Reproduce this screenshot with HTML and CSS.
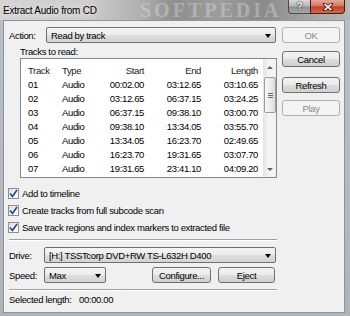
FILE: index.html
```html
<!DOCTYPE html>
<html>
<head>
<meta charset="utf-8">
<link rel="stylesheet" href="styles.css">
</head>
<body>
<div class="window">
  <div class="titlebar">
    <span class="title">Extract Audio from CD</span>
    <span class="watermark">SOFTPEDIA</span>
    <div class="caption-btns">
      <div class="cap help">?</div>
      <div class="cap close">
        <svg width="10" height="8" viewBox="0 0 10 8"><path d="M1.5 0.8 L8.5 7.2 M8.5 0.8 L1.5 7.2" stroke="#3a0a05" stroke-width="3" stroke-linecap="square"/><path d="M1.5 0.8 L8.5 7.2 M8.5 0.8 L1.5 7.2" stroke="#fff" stroke-width="1.6"/></svg>
      </div>
    </div>
  </div>
  <div class="client">
    <div class="main">
      <div class="row action-row">
        <span class="lbl lbl-action">Action:</span>
        <div class="combo combo-action">Read by track<span class="arrow"></span></div>
      </div>
      <div class="tracks-label">Tracks to read:</div>
      <div class="list">
        <div class="list-body">
          <div class="lv-row header"><span>Track</span><span>Type</span><span class="r">Start</span><span class="r">End</span><span class="r">Length</span></div>
          <div class="lv-row"><span>01</span><span>Audio</span><span class="r">00:02.00</span><span class="r">03:12.65</span><span class="r">03:10.65</span></div>
          <div class="lv-row"><span>02</span><span>Audio</span><span class="r">03:12.65</span><span class="r">06:37.15</span><span class="r">03:24.25</span></div>
          <div class="lv-row"><span>03</span><span>Audio</span><span class="r">06:37.15</span><span class="r">09:38.10</span><span class="r">03:00.70</span></div>
          <div class="lv-row"><span>04</span><span>Audio</span><span class="r">09:38.10</span><span class="r">13:34.05</span><span class="r">03:55.70</span></div>
          <div class="lv-row"><span>05</span><span>Audio</span><span class="r">13:34.05</span><span class="r">16:23.70</span><span class="r">02:49.65</span></div>
          <div class="lv-row"><span>06</span><span>Audio</span><span class="r">16:23.70</span><span class="r">19:31.65</span><span class="r">03:07.70</span></div>
          <div class="lv-row"><span>07</span><span>Audio</span><span class="r">19:31.65</span><span class="r">23:41.10</span><span class="r">04:09.20</span></div>
        </div>
        <div class="vscroll">
          <div class="sb-btn"><span class="tri-up"></span></div>
          <div class="sb-track">
            <div class="sb-thumb"><span class="grip"></span></div>
          </div>
          <div class="sb-btn"><span class="tri-down"></span></div>
        </div>
      </div>
      <div class="checks">
        <label class="chk"><span class="box"><svg width="9" height="9" viewBox="0 0 9 9"><path d="M1 4.5 L3.5 7.5 L8 1" fill="none" stroke="#23409a" stroke-width="1.6"/></svg></span>Add to timeline</label>
        <label class="chk"><span class="box"><svg width="9" height="9" viewBox="0 0 9 9"><path d="M1 4.5 L3.5 7.5 L8 1" fill="none" stroke="#23409a" stroke-width="1.6"/></svg></span>Create tracks from full subcode scan</label>
        <label class="chk"><span class="box"><svg width="9" height="9" viewBox="0 0 9 9"><path d="M1 4.5 L3.5 7.5 L8 1" fill="none" stroke="#23409a" stroke-width="1.6"/></svg></span>Save track regions and index markers to extracted file</label>
      </div>
      <div class="sep sep1"></div>
      <div class="row drive-row">
        <span class="lbl lbl-short">Drive:</span>
        <div class="combo combo-drive">[H:] TSSTcorp DVD+RW TS-L632H D400<span class="arrow"></span></div>
      </div>
      <div class="row speed-row">
        <span class="lbl lbl-short">Speed:</span>
        <div class="combo combo-speed">Max<span class="arrow"></span></div>
        <div class="btn btn-configure">Configure...</div>
        <div class="btn btn-eject">Eject</div>
      </div>
      <div class="sep sep2"></div>
      <div class="row sel-row">
        <span class="sel-lbl">Selected length:</span>
        <span class="sel-val">00:00.00</span>
      </div>
    </div>
    <div class="side">
      <div class="btn disabled b-ok">OK</div>
      <div class="btn b-cancel">Cancel</div>
      <div class="btn b-refresh">Refresh</div>
      <div class="btn disabled b-play">Play</div>
    </div>
  </div>
</div>
</body>
</html>
```

FILE: styles.css
```css
* { box-sizing: border-box; }
html, body { margin: 0; padding: 0; }
body {
  width: 350px;
  height: 316px;
  overflow: hidden;
  font-family: "Liberation Sans", Arial, sans-serif;
  font-size: 9.5px;
  letter-spacing: -0.35px;
  color: #000;
}
.window {
  width: 350px;
  height: 316px;
  background: linear-gradient(180deg, #b8c0c8 0%, #aeb4ba 100%);
  display: flex;
  flex-direction: column;
}
.titlebar {
  height: 20px;
  position: relative;
  overflow: hidden;
  display: flex;
  align-items: center;
  background: linear-gradient(90deg, #d4d4d4 0%, #cdcdcd 25%, #b0b0b0 40%, #8e8e8e 50%, #9c9c9c 62%, #8a8a8a 75%, #a4a4a4 88%, #b8b8b8 100%);
}
.title {
  position: relative;
  z-index: 2;
  padding-left: 3px;
  font-size: 10px;
  letter-spacing: -0.25px;
  color: #000;
  text-shadow: 0 0 4px #e8e8e8, 0 0 6px #e8e8e8;
}
.watermark {
  position: absolute;
  left: 140px;
  top: 0;
  font-family: "Liberation Serif", serif;
  font-weight: bold;
  font-size: 20px;
  line-height: 20px;
  letter-spacing: 3px;
  color: rgba(235, 235, 235, 0.35);
  z-index: 1;
}
.caption-btns {
  position: absolute;
  top: 0;
  right: 5px;
  display: flex;
  z-index: 3;
}
.cap {
  height: 14px;
  display: flex;
  align-items: center;
  justify-content: center;
  border: 1px solid #4a4a4a;
  border-top: none;
}
.help {
  width: 22px;
  border-radius: 0 0 0 4px;
  border-right: none;
  background: linear-gradient(180deg, #d8d8d8 0%, #b8b8b8 45%, #909090 55%, #a8a8a8 100%);
  color: #fff;
  font-weight: bold;
  font-size: 10px;
  letter-spacing: 0;
  text-shadow: 0 0 2px #222, 0 0 1px #000;
}
.close {
  width: 35px;
  border-radius: 0 0 4px 0;
  border-color: #4a1a10;
  background: linear-gradient(180deg, #e6a898 0%, #d8806c 40%, #c0442e 55%, #d46a50 100%);
}
.client {
  margin-left: 3px;
  width: 342px;
  height: 293px;
  border: 1px solid #8f949a;
  background: #f0f0f0;
  display: flex;
  padding: 6px 4px 0 5px;
  gap: 5px;
}
.main {
  width: 268px;
  display: flex;
  flex-direction: column;
}
.side {
  width: 58px;
  display: flex;
  flex-direction: column;
}
.row {
  display: flex;
  align-items: center;
}
.lbl-action { width: 37px; }
.lbl-short { width: 35px; }
.combo {
  position: relative;
  height: 16px;
  border: 1px solid #707070;
  border-radius: 2px;
  background: linear-gradient(180deg, #f4f4f4 0%, #ececec 50%, #dedede 51%, #d4d4d4 100%);
  padding-left: 4px;
  display: flex;
  align-items: center;
  white-space: nowrap;
}
.arrow {
  position: absolute;
  right: 4px;
  top: 6px;
  width: 0;
  height: 0;
  border-left: 3.5px solid transparent;
  border-right: 3.5px solid transparent;
  border-top: 4px solid #000;
}
.combo-action { width: 230px; }
.action-row { height: 16px; }
.tracks-label {
  margin-top: 3px;
  margin-left: 11px;
  line-height: 12px;
  height: 12px;
}
.list {
  margin-left: 11px;
  width: 257px;
  height: 120px;
  border: 1px solid #828790;
  background: #fff;
  display: flex;
}
.list-body {
  width: 242px;
}
.lv-row {
  display: grid;
  grid-template-columns: 34px 40px 42px 57px 57px;
  padding-left: 7px;
  line-height: 14px;
  height: 14px;
  white-space: nowrap;
}
.lv-row.header {
  height: 19px;
  padding-top: 5px;
  color: #1a1a1a;
}
.r { text-align: right; }
.vscroll {
  width: 13px;
  display: flex;
  flex-direction: column;
  background: linear-gradient(90deg, #e6e6e6 0%, #f5f5f5 40%, #f2f2f2 100%);
  border-left: 1px solid #e4e4e4;
}
.sb-btn {
  height: 16px;
  display: flex;
  align-items: center;
  justify-content: center;
}
.tri-up {
  width: 0; height: 0;
  border-left: 3px solid transparent;
  border-right: 3px solid transparent;
  border-bottom: 3px solid #606060;
}
.tri-down {
  width: 0; height: 0;
  border-left: 3px solid transparent;
  border-right: 3px solid transparent;
  border-top: 3px solid #606060;
}
.sb-track {
  flex: 1;
  padding-top: 2px;
}
.sb-thumb {
  height: 36px;
  border: 1px solid #9c9c9c;
  border-radius: 2px;
  background: linear-gradient(90deg, #f6f6f6 0%, #ececec 50%, #dcdcdc 100%);
  display: flex;
  align-items: center;
  justify-content: center;
}
.grip {
  width: 5px;
  height: 5px;
  border-top: 1px solid #6a6a6a;
  border-bottom: 1px solid #6a6a6a;
  position: relative;
}
.grip::after {
  content: "";
  position: absolute;
  left: 0;
  right: 0;
  top: 1px;
  border-top: 1px solid #6a6a6a;
}
.checks {
  margin-top: 7px;
  display: flex;
  flex-direction: column;
}
.chk {
  height: 17px;
  display: flex;
  align-items: center;
  margin-left: -1px;
  white-space: nowrap;
}
.box {
  width: 11px;
  height: 11px;
  border: 1px solid #8e8f8f;
  background: linear-gradient(135deg, #dcdcdc 0%, #f4f4f4 60%, #ffffff 100%);
  margin-right: 3px;
  display: flex;
  align-items: center;
  justify-content: center;
}
.sep {
  height: 2px;
  border-top: 1px solid #a0a0a0;
  border-bottom: 1px solid #ffffff;
}
.sep1 { margin-top: 3px; }
.drive-row { margin-top: 6px; height: 16px; }
.combo-drive { width: 232px; }
.speed-row { margin-top: 4px; height: 16px; }
.combo-speed { width: 62px; }
.btn {
  height: 16px;
  border: 1px solid #707070;
  border-radius: 3px;
  background: linear-gradient(180deg, #f2f2f2 0%, #ebebeb 50%, #dddddd 51%, #cfcfcf 100%);
  display: flex;
  align-items: center;
  justify-content: center;
  white-space: nowrap;
}
.btn.disabled {
  border-color: #adb2b5;
  background: #f4f4f4;
  color: #8a8a8a;
}
.btn-configure { width: 59px; margin-left: 46px; }
.btn-eject { width: 57px; margin-left: 7px; }
.sep2 { margin-top: 6px; }
.sel-row {
  margin-top: 3px;
  line-height: 12px;
  height: 12px;
}
.sel-lbl { width: 70px; }
.b-ok { margin-top: 0; }
.b-cancel { margin-top: 8px; }
.b-refresh { margin-top: 10px; }
.b-play { margin-top: 7px; }
```
